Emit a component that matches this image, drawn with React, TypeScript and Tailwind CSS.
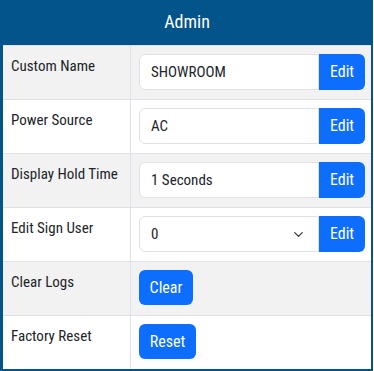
import { ChevronDown } from "lucide-react";

interface rowProps {
  label: string;
  gray?: boolean;
  children: React.ReactNode;
}

function Row(props: rowProps) {
  return (
    <div className={`flex h-[54px] border-t border-[#dee2e6] ${props.gray ? "bg-[#f2f2f2]" : "bg-white"}`}>
      <div className="w-[128px] shrink-0 border-r border-[#dee2e6] pl-[8px] pt-[10px] text-[15px] leading-[21px] text-[#212529]">
        {props.label}
      </div>
      <div className="flex-1 pl-[8px] pr-[6px] pt-[8px]">{props.children}</div>
    </div>
  );
}

function InputGroup(props: { value: string; select?: boolean }) {
  return (
    <div className="flex h-[36px] w-full">
      <div className="flex flex-1 items-center justify-between rounded-l-[6px] border border-[#dee2e6] bg-white pl-[11px] pr-[12px] text-[15px] text-[#212529]">
        <span>{props.value}</span>
        {props.select && <ChevronDown size={15} strokeWidth={2} className="text-[#343a40]" />}
      </div>
      <button className="w-[46px] rounded-r-[6px] bg-[#0d6efd] text-[16px] text-white">Edit</button>
    </div>
  );
}

export default function App() {
  return (
    <div className="h-[371px] w-[374px] bg-white font-stretch-condensed" style={{ fontFamily: "'Roboto Condensed', Roboto, 'Liberation Sans', sans-serif" }}>
      <div className="h-[371px] w-[373px] border-x-[3px] border-b-[3px] border-[#03548a] border-r-2">
        <div className="flex h-[45px] items-center justify-center bg-[#03548a] pb-[2px] text-[18px] text-white">Admin</div>
        <Row label="Custom Name" gray>
          <InputGroup value="SHOWROOM" />
        </Row>
        <Row label="Power Source">
          <InputGroup value="AC" />
        </Row>
        <Row label="Display Hold Time" gray>
          <InputGroup value="1 Seconds" />
        </Row>
        <Row label="Edit Sign User">
          <InputGroup value="0" select />
        </Row>
        <Row label="Clear Logs" gray>
          <button className="h-[35px] w-[54px] rounded-[6px] bg-[#0d6efd] text-[16px] text-white">Clear</button>
        </Row>
        <Row label="Factory Reset">
          <button className="h-[35px] w-[57px] rounded-[6px] bg-[#0d6efd] text-[16px] text-white">Reset</button>
        </Row>
      </div>
    </div>
  );
}
